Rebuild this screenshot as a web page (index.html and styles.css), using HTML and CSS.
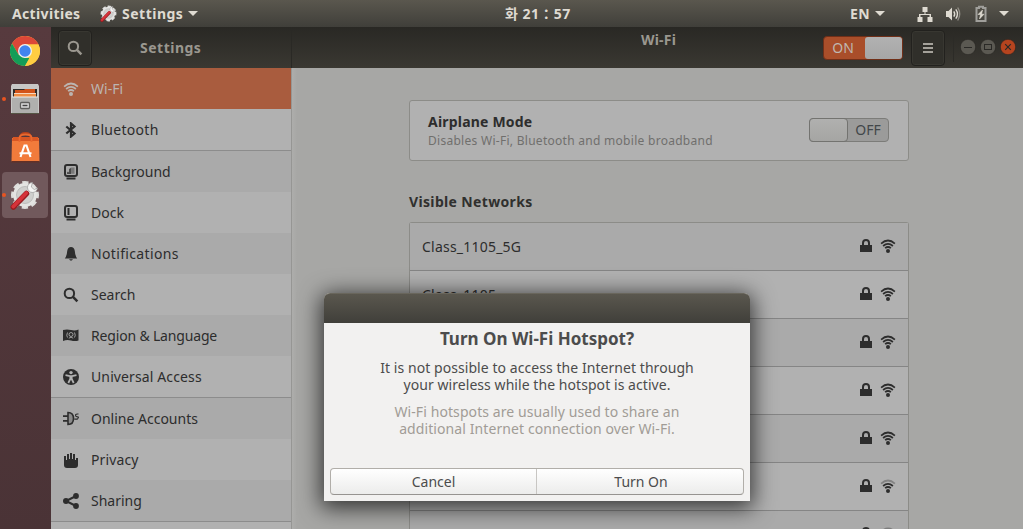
FILE: index.html
```html
<!DOCTYPE html>
<html lang="en">
<head>
<meta charset="utf-8">
<title>Settings</title>
<link rel="stylesheet" href="styles.css">
</head>
<body>
<svg class="defs" width="0" height="0" aria-hidden="true">
  <defs>
    <symbol id="wifi" viewBox="0 0 16 16">
      <g fill="none" stroke="currentColor" stroke-width="1.7">
        <path d="M1.1 5.6Q8 -0.6 14.9 5.6"/><path d="M3.1 8Q8 3.6 12.9 8"/><path d="M5.1 10.2Q8 7.8 10.9 10.2"/>
      </g><circle cx="8" cy="12.9" r="2" fill="currentColor"/>
    </symbol>
    <symbol id="wifi-mid" viewBox="0 0 16 16">
      <g fill="none" stroke="currentColor" stroke-width="1.7">
        <path opacity=".35" d="M1.1 5.6Q8 -0.6 14.9 5.6"/><path d="M3.1 8Q8 3.6 12.9 8"/><path d="M5.1 10.2Q8 7.8 10.9 10.2"/>
      </g><circle cx="8" cy="12.9" r="2" fill="currentColor"/>
    </symbol>
    <symbol id="lock" viewBox="0 0 16 16"><path d="M2 7h12v7H2z" fill="currentColor"/><path d="M5 8V5Q5 2 8 2t3 3V8" fill="none" stroke="currentColor" stroke-width="2"/></symbol>
    <symbol id="search" viewBox="0 0 16 16"><circle cx="6.400" cy="6.400" r="4.700" fill="none" stroke="currentColor" stroke-width="2"/><path d="M9.700 9.700l4.700 4.700" stroke="currentColor" stroke-width="2.500"/></symbol>
    <symbol id="gearwrench" viewBox="0 0 30 30">
      <circle cx="15" cy="15" r="11.500" fill="none" stroke="#dededc" stroke-width="5" stroke-dasharray="5.600 3.432" transform="rotate(-14 15 15)"/>
      <circle cx="15" cy="15" r="11.900" fill="#e4e4e2"/><circle cx="15" cy="15" r="8.500" fill="#cfcfcd" stroke="#b4b4b2" stroke-width=".8"/>
      <path d="M16 14l5-5" stroke="#eee" stroke-width="3.600"/>
      <path d="M22.500 2.500a5 5 0 1 0 5 5.500l-3.200 1.600-3-2.600z" fill="#f4f4f3" stroke="#999" stroke-width=".7"/>
      <path d="M3.300 27L16.500 13.500" stroke="#981c20" stroke-width="5.500" stroke-linecap="round"/><path d="M3.300 26.500L16.300 13" stroke="#d5333a" stroke-width="3.800" stroke-linecap="round"/>
    </symbol>
  </defs>
</svg>

<header class="topbar">
  <span class="activities">Activities</span>
  <span class="appmenu"><svg width="17" height="17"><use href="#gearwrench" width="17" height="17"/></svg><b>Settings</b><i class="arrow"></i></span>
  <span class="clock">화 21：57</span>
  <span class="tray">
    <b>EN</b><i class="arrow"></i>
    <svg class="net" width="16" height="16" viewBox="0 0 16 16" fill="currentColor"><path d="M5.500 1h5v5H8.500v2H14v3h1.500v5h-5v-5h2V9h-9v2h2v5h-5v-5H2V8h5.500V6h-2z"/></svg>
    <svg class="vol" width="16" height="16" viewBox="0 0 16 16"><path d="M1 5h2.500L7 1.500v13L3.500 11H1z" fill="currentColor"/><g fill="none" stroke="currentColor" stroke-width="1.400"><path d="M8.800 5.300q1.800 2.700 0 5.400M10.800 3.400q3.300 4.600 0 9.200"/><path opacity=".45" d="M12.700 1.500q4 6.500 0 13"/></g></svg>
    <svg class="bat" width="14" height="18" viewBox="0 0 14 18"><path d="M5 3V1.700h4V3h2.500v13h-9V3z" fill="none" stroke="#a09f9b" stroke-width="2"/><path d="M8.500 5L4 9.500h2.500L5.500 14 10 9.200H7.600z" fill="currentColor" stroke="currentColor" stroke-width=".6"/></svg>
    <i class="arrow"></i>
  </span>
</header>

<div class="desktop">
  <nav class="dock">
    <div class="dock-item">
      <svg width="30" height="30" viewBox="0 0 30 30"><circle cx="15" cy="15" r="15" fill="#ffcd42"/><path d="M2 7.500A15 15 0 0 1 28.500 8.500L15 8.500 8.500 18.500z" fill="#dc4738"/><path d="M2 7.500L8.500 18.500 15 22h5L15 30A15 15 0 0 1 2 7.500z" fill="#149d58"/><path d="M15 8.500H28.500A15 15 0 0 1 15 30L21.500 18z" fill="#ffcd42"/><circle cx="15" cy="15" r="7" fill="#f1f1f1"/><circle cx="15" cy="15" r="5.700" fill="#4284f0"/></svg>
    </div>
    <div class="dock-item running">
      <svg width="28" height="30" viewBox="0 0 28 30"><path d="M1 0h26l1 2v27H0V2z" fill="#c7c7c5"/><path d="M0 29h28v1H0z" fill="#554"/><path d="M2 5h24v8H2z" fill="#302b28"/><path d="M4 6h9l1-1h10v8H4z" fill="#d2531a"/><path d="M3 9.500h22V13H3z" fill="#ef8d45"/><path d="M3 9.500h22" stroke="#fbe3cf" stroke-width=".9"/><path d="M1 13h26v16H1z" fill="#b0b0ae"/><path d="M1 13h26" stroke="#eee"/><rect x="9.500" y="18.500" width="9" height="6" rx="1" fill="#ddd" stroke="#5e5e5c" stroke-width="1.300"/><path d="M11.500 21.500h5" stroke="#444" stroke-width="1.500"/></svg>
    </div>
    <div class="dock-item">
      <svg width="29" height="31" viewBox="0 0 29 31"><path d="M9.500 10V5q0-4 5-4t5 4v5" fill="none" stroke="#ba421b" stroke-width="2"/><path d="M1 6h27l.5 23.500H.5z" fill="#f27b3b"/><path d="M2 5h25l1 4H1z" fill="#d95724"/><path d="M.5 29h28v1.500H.5z" fill="#623027"/><path d="M8.500 10V5.500q0-3 6-3t6 3V10" fill="none" stroke="#e9692f" stroke-width="1.800"/><path d="M9.500 25l4-11.500h2l4 11.500M8.500 21.300h12" fill="none" stroke="#fff" stroke-width="2.100"/></svg>
    </div>
    <div class="dock-item running current"><svg width="30" height="30"><use href="#gearwrench" width="30" height="30"/></svg></div>
  </nav>

  <main class="window">
    <div class="headerbar">
      <div class="head-left"><button class="hbtn"><svg width="16" height="16"><use href="#search"/></svg></button><span class="head-title">Settings</span></div>
      <div class="head-right">
        <span class="page-title">Wi-Fi</span>
        <div class="switch-on"><span>ON</span><i></i></div>
        <button class="hbtn menu"><i></i><i></i><i></i></button>
        <div class="controls">
          <svg width="16" height="16" viewBox="0 0 16 16"><circle class="wc" cx="8" cy="8" r="7.700"/><path d="M4 8.500h8" stroke="#2a2926" stroke-width="1"/></svg>
          <svg width="16" height="16" viewBox="0 0 16 16"><circle class="wc" cx="8" cy="8" r="7.700"/><rect x="4.500" y="5.500" width="7" height="5" fill="none" stroke="#2a2926" stroke-width="1"/></svg>
          <svg width="16" height="16" viewBox="0 0 16 16"><circle class="wc close" cx="8" cy="8" r="7.700"/><path d="M5.200 5.200l5.600 5.600M10.800 5.200l-5.600 5.600" stroke="#2a2926" stroke-width="1.200"/></svg>
        </div>
      </div>
    </div>
    <div class="body">
      <aside class="sidebar">
        <div class="item selected"><svg width="16" height="16"><use href="#wifi"/></svg><span>Wi-Fi</span></div>
        <div class="item light bluetooth"><svg width="16" height="16" viewBox="0 0 16 16"><path d="M3.300 4.500l8.200 7L8 14.500v-13l3.500 3-8.200 7" fill="none" stroke="currentColor" stroke-width="2.200"/></svg><span>Bluetooth</span></div>
        <div class="item sep"><svg width="16" height="16" viewBox="0 0 16 16"><rect x="2" y="1" width="12" height="11" rx="2" fill="none" stroke="currentColor" stroke-width="2"/><path d="M4.500 9.500h3.200v-6h3.800v6.200h-7z" fill="currentColor" opacity=".4"/><path d="M4 8.500l1-1 1 1V5l2-1v6H4z" fill="currentColor" opacity=".75"/><path d="M3.500 14.500h9" stroke="currentColor" stroke-width="2"/></svg><span>Background</span></div>
        <div class="item light"><svg width="16" height="16" viewBox="0 0 16 16"><rect x="2" y="1" width="12" height="11" rx="2" fill="none" stroke="currentColor" stroke-width="2"/><path d="M4.500 3h2v7h-2z" fill="currentColor"/><path d="M3.500 14.500h9" stroke="currentColor" stroke-width="2"/></svg><span>Dock</span></div>
        <div class="item wide"><svg width="16" height="16" viewBox="0 0 16 16"><path d="M8 1q3.200 0 3.800 4 .4 5 2.400 7.500H1.800q2-2.500 2.400-7.500.6-4 3.800-4zM6 13.300h4l-1.200 1.200H7.200z" fill="currentColor"/></svg><span>Notifications</span></div>
        <div class="item light"><svg width="16" height="16"><use href="#search"/></svg><span>Search</span></div>
        <div class="item tight"><svg width="16" height="16" viewBox="0 0 16 16"><path d="M0 2q4-1.200 8 0t7.500-.5v11q-3.500 1.200-7.500 0T0 13z" fill="currentColor"/><g fill="none" stroke="#a8a8a8" stroke-width=".9"><circle cx="8" cy="6.500" r="2"/><path d="M4.500 4.500q-1.500 3 0 5M11.500 4.500q1.500 3 0 5M5.800 10.200q2.200-2 4.400 0"/></g></svg><span>Region &amp; Language</span></div>
        <div class="item light roomy"><svg width="16" height="16" viewBox="0 0 16 16"><circle cx="8" cy="8" r="8" fill="currentColor"/><g fill="none" stroke="#b1b1b1" stroke-width="1.800"><path d="M2.500 6.200l4.500 1h2l4.500-1M7.300 7v3l-2 4M8.700 7v3l2 4"/></g><circle cx="8" cy="3.600" r="1.700" fill="#b1b1b1"/></svg><span>Universal Access</span></div>
        <div class="item sep"><svg width="16" height="16" viewBox="0 0 16 16"><path d="M5 1.500q5.500 0 5.500 6T5 13.500z" fill="#8a8a8a" stroke="currentColor" stroke-width="1.600"/><path d="M0 5.200h5M0 9.800h5" stroke="currentColor" stroke-width="1.700"/><path d="M15.500 3q-3-.3-3 1.200t2 1.700-.2 2.200h-3" fill="none" stroke="currentColor" stroke-width="1.100"/></svg><span>Online Accounts</span></div>
        <div class="item light roomy"><svg width="16" height="16" viewBox="0 0 16 16"><path d="M1 4h2v4h1V2h2v5h1V1h2v6h1V2h2v6h1V6h2v7q0 3-3 3H4q-3 0-3-3z" fill="currentColor"/></svg><span>Privacy</span></div>
        <div class="item"><svg width="16" height="16" viewBox="0 0 16 16"><g fill="currentColor"><circle cx="3" cy="8" r="3"/><circle cx="13" cy="3" r="2.900"/><circle cx="13" cy="13" r="2.900"/></g><path d="M13 3L3 8l10 5" fill="none" stroke="currentColor" stroke-width="2"/></svg><span>Sharing</span></div>
        <div class="item sep light"></div>
      </aside>
      <section class="content">
        <div class="airplane">
          <div><h2>Airplane Mode</h2><p>Disables Wi-Fi, Bluetooth and mobile broadband</p></div>
          <div class="switch-off"><i></i><span>OFF</span></div>
        </div>
        <h3>Visible Networks</h3>
        <div class="networks">
          <div class="net-row"><span>Class_1105_5G</span><svg width="16" height="16"><use href="#lock"/></svg><svg width="16" height="16"><use href="#wifi"/></svg></div>
          <div class="net-row"><span>Class_1105</span><svg width="16" height="16"><use href="#lock"/></svg><svg width="16" height="16"><use href="#wifi"/></svg></div>
          <div class="net-row"><svg width="16" height="16"><use href="#lock"/></svg><svg width="16" height="16"><use href="#wifi"/></svg></div>
          <div class="net-row"><svg width="16" height="16"><use href="#lock"/></svg><svg width="16" height="16"><use href="#wifi"/></svg></div>
          <div class="net-row"><svg width="16" height="16"><use href="#lock"/></svg><svg width="16" height="16"><use href="#wifi"/></svg></div>
          <div class="net-row"><svg width="16" height="16"><use href="#lock"/></svg><svg width="16" height="16"><use href="#wifi-mid"/></svg></div>
          <div class="net-row"><span>hotel</span><svg width="16" height="16"><use href="#lock"/></svg><svg width="16" height="16"><use href="#wifi-mid"/></svg></div>
        </div>
      </section>
    </div>
  </main>
</div>

<div class="dialog">
  <div class="dialog-bar"></div>
  <h1>Turn On Wi-Fi Hotspot?</h1>
  <p class="msg"><span>It is not possible to access the Internet through</span><br><span>your wireless while the hotspot is active.</span></p>
  <p class="msg dim"><span>Wi-Fi hotspots are usually used to share an</span><br><span>additional Internet connection over Wi-Fi.</span></p>
  <div class="buttons"><button>Cancel</button><button>Turn On</button></div>
</div>
</body>
</html>
```
FILE: styles.css
```css
* { box-sizing: border-box; margin: 0; padding: 0; }
html, body { width: 1023px; height: 529px; overflow: hidden; }
body { font: 14px/20px "Noto Sans", "Noto Sans CJK KR", sans-serif; color: #2d2d2d; background: #50383b; display: flex; flex-direction: column; }
button { font: inherit; color: inherit; border: 0; background: none; }
svg { display: block; flex: none; }
.defs { position: absolute; }

.topbar { height: 27px; flex: none; background: linear-gradient(#5a574e, #403f3a); color: #dfdbd2; font-weight: 700; display: grid; grid-template-columns: 100px 405px 1fr 173px; align-items: center; white-space: nowrap; }
.activities { padding-left: 12px; letter-spacing: .35px; }
.appmenu { display: flex; align-items: center; }
.appmenu b { font-weight: 700; width: 63px; margin: 0 3px 0 5px; letter-spacing: .5px; }
.clock { letter-spacing: .45px; }
.arrow { width: 0; height: 0; border: 5px solid transparent; border-top-color: #dfdbd2; border-bottom: 0; flex: none; }
.tray { display: flex; align-items: center; }
.tray b { font-weight: 700; width: 25px; letter-spacing: .3px; }
.net { margin-left: 32px; }
.vol { margin-left: 12px; }
.bat { margin: 0 11px 0 13px; }
.tray .arrow:last-child { margin-left: 0; }

.desktop { flex: 1; display: flex; min-height: 0; }
.dock { width: 51px; flex: none; padding: 1px 2px; display: flex; flex-direction: column; gap: 2px; background: linear-gradient(#573a3e, #4a3336); }
.dock-item { width: 46px; height: 46px; border-radius: 4px; display: flex; align-items: center; justify-content: center; position: relative; }
.running::before { content: ""; position: absolute; left: 0; top: 21px; width: 4px; height: 4px; border-radius: 50%; background: #e95420; }
.current { background: #71595c; }

.window { flex: 1; display: flex; flex-direction: column; min-width: 0; }
.headerbar { height: 41px; flex: none; display: flex; background: linear-gradient(#292824, #3a3832); color: #9a978f; }
.head-left { width: 241px; display: flex; align-items: center; padding-left: 7px; border-right: 1px solid #2a2925; }
.hbtn { width: 34px; height: 36px; border: 1px solid #22211e; border-radius: 4px; background: #302f2a; box-shadow: inset 0 0 0 1px #383731; display: flex; align-items: center; justify-content: center; }
.head-title { font-weight: 700; margin-left: 48px; letter-spacing: .5px; }
.head-right { flex: 1; display: flex; align-items: center; }
.page-title { font-weight: 700; width: 38px; margin: -16px 144px 0 349px; white-space: nowrap; letter-spacing: .2px; }
.switch-on { width: 80px; height: 24px; border: 1px solid #702f18; border-radius: 4px; background: #a94e2a; display: flex; color: #c0b7b0; }
.switch-on span { width: 41px; text-align: center; line-height: 22px; padding-right: 3px; }
.switch-on i { width: 37px; height: 22px; border-radius: 3px; background: linear-gradient(#b1b1b1, #a6a6a6); }
.menu { flex-direction: column; gap: 2px; margin-left: 8px; }
.menu i { width: 10px; height: 2px; background: #a4a19a; }
.controls { display: flex; gap: 4px; margin-left: 8px; border-left: 1px solid #2c2b27; padding: 7px 0 7px 6px; margin-top: -1px; }
.wc { fill: #5b5952; stroke: #252420; stroke-width: .6; }
.close { fill: #b5441f; }

.body { flex: 1; display: flex; min-height: 0; }
.sidebar { width: 241px; border-right: 1px solid #969694; overflow: hidden; background: #b1b1b1; }
.item { height: 41px; display: flex; align-items: center; gap: 12px; padding: 0 0 0 12px; background: #aaa; }
.light { background: #b1b1b1; }
.selected { background: #a95c3e; color: #bcb5b1; }
.sep { height: 42px; border-top: 1px solid #8c8c8c; }
.wide span { letter-spacing: .35px; }
.bluetooth span { letter-spacing: .3px; }
.roomy span { letter-spacing: .12px; }
.tight span { letter-spacing: -.17px; }
.content { flex: 1; padding: 32px 114px 0 117px; background: linear-gradient(90deg, #adadab 0, #a7a7a5 5px); overflow: hidden; }
.airplane { height: 61px; border: 1px solid #8c8c88; border-radius: 3px; background: #b1b1b1; display: flex; justify-content: space-between; align-items: center; padding: 0 19px 0 18px; }
.airplane h2 { font-size: 14px; line-height: 20px; font-weight: 700; letter-spacing: .2px; }
.airplane p { font-size: 12px; line-height: 18px; color: #706f6d; white-space: nowrap; letter-spacing: .28px; }
.switch-off { width: 80px; height: 24px; border: 1px solid #7c7c79; border-radius: 4px; background: #9b9b9a; display: flex; color: #42474a; margin-top: -1px; }
.switch-off i { width: 39px; height: 24px; margin: -1px 0 0 -1px; border: 1px solid #737370; border-radius: 4px; background: linear-gradient(#b0b0af, #a5a5a3); }
.switch-off span { flex: 1; text-align: center; line-height: 22px; }
h3 { font-size: 14px; line-height: 20px; font-weight: 700; margin: 31px 0 10px; color: #30302e; letter-spacing: .35px; }
.networks { border: 1px solid #8c8c88; border-bottom: 0; border-radius: 3px 3px 0 0; }
.net-row { height: 48px; border-bottom: 1px solid #858585; background: #aaa; display: flex; align-items: center; gap: 6px; padding: 0 12px; letter-spacing: .22px; }
.net-row:nth-child(even) { background: #b1b1b1; }
.net-row svg { margin-bottom: 1px; }
.net-row svg:nth-last-child(2) { margin-left: auto; }

.dialog { position: absolute; left: 324px; top: 293px; width: 426px; height: 208px; border-radius: 6px 6px 0 0; background: #f2f1f0; box-shadow: 0 4px 22px 3px rgba(0,0,0,.7); text-align: center; color: #4c4c4c; display: flex; flex-direction: column; }
.dialog-bar { height: 30px; flex: none; border-radius: 6px 6px 0 0; background: linear-gradient(#5a574e, #403f3a); border-top: 1px solid #69665c; }
.dialog h1 { font-size: 17px; line-height: 24px; font-weight: 700; margin-top: 4px; }
.msg { line-height: 17px; margin-top: 8px; white-space: nowrap; letter-spacing: .06px; }
.msg.dim { margin-top: 10px; color: #a19c96; letter-spacing: .09px; }
.buttons { height: 27px; margin: auto 6px 6px; border: 1px solid #b1aea9; border-bottom-color: #969390; border-radius: 4px; display: flex; background: linear-gradient(#fff, #ececeb); }
.buttons button { flex: none; width: 205px; }
.buttons button + button { width: 207px; padding-left: 2px; border-left: 1px solid #c8c6c3; }
```
